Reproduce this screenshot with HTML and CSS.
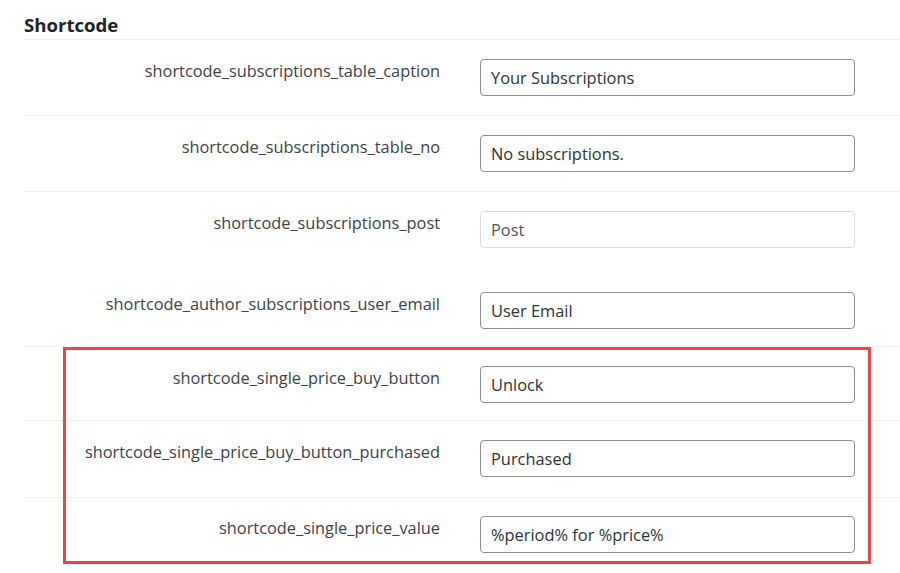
FILE: index.html
```html
<!DOCTYPE html>
<html>

<head>
    <title>Shortcode Settings</title>
    <link rel="stylesheet" href="styles.css">
</head>

<body>
    <div class="wrap">
        <h2 class="section-title">Shortcode</h2>

        <div class="field-row">
            <label class="field-label" for="caption">shortcode_subscriptions_table_caption</label>
            <input class="field-input" type="text" id="caption" value="Your Subscriptions">
        </div>

        <div class="field-row">
            <label class="field-label" for="tableNo">shortcode_subscriptions_table_no</label>
            <input class="field-input" type="text" id="tableNo" value="No subscriptions.">
        </div>

        <div class="field-row post-row">
            <label class="field-label" for="post">shortcode_subscriptions_post</label>
            <input class="field-input light" type="text" id="post" value="Post">
        </div>

        <div class="field-row no-line">
            <label class="field-label" for="userEmail">shortcode_author_subscriptions_user_email</label>
            <input class="field-input" type="text" id="userEmail" value="User Email">
        </div>

        <div class="marked">
            <div class="field-row short">
                <label class="field-label" for="buyButton">shortcode_single_price_buy_button</label>
                <input class="field-input" type="text" id="buyButton" value="Unlock">
            </div>

            <div class="field-row tall">
                <label class="field-label" for="purchased">shortcode_single_price_buy_button_purchased</label>
                <input class="field-input" type="text" id="purchased" value="Purchased">
            </div>

            <div class="field-row last">
                <label class="field-label" for="priceValue">shortcode_single_price_value</label>
                <input class="field-input" type="text" id="priceValue" value="%period% for %price%">
            </div>
        </div>
    </div>
</body>

</html>
```

FILE: styles.css
```css
*,
*::before,
*::after {
    box-sizing: border-box;
}

body {
    margin: 0;
    background: #fff;
    font-family: "Open Sans", "Noto Sans", sans-serif;
    color: #3c434a;
    overflow: hidden;
}

.wrap {
    padding-left: 24px;
}

.section-title {
    margin: 0;
    padding-top: 12px;
    height: 39px;
    font-size: 18.6px;
    font-weight: 700;
    line-height: 26px;
    color: #1d2327;
}

.field-row {
    display: flex;
    align-items: flex-start;
    border-top: 1px solid #f0f0f1;
    padding: 19px 0;
}

.post-row {
    padding-bottom: 25px;
}

.no-line {
    border-top: none;
    padding-bottom: 17px;
}

.short {
    padding-bottom: 17px;
}

.tall {
    padding-bottom: 20px;
}

.last {
    padding-top: 18px;
}

.field-label {
    width: 416px;
    padding-top: 1px;
    text-align: right;
    font-size: 16.35px;
    line-height: 23px;
}

.field-input {
    margin-left: 40px;
    width: 375px;
    height: 37px;
    padding: 0 10px;
    border: 1px solid #8c8f94;
    border-radius: 4px;
    font-family: inherit;
    font-size: 16.4px;
    color: #2c3338;
    background: #fff;
}

.field-input.light {
    border-color: #dcdcde;
    color: #50575e;
}

.marked {
    position: relative;
}

.marked::after {
    content: "";
    position: absolute;
    left: 39px;
    top: 1px;
    width: 808px;
    height: 217px;
    border: 3px solid #ef4444;
    pointer-events: none;
}
```
